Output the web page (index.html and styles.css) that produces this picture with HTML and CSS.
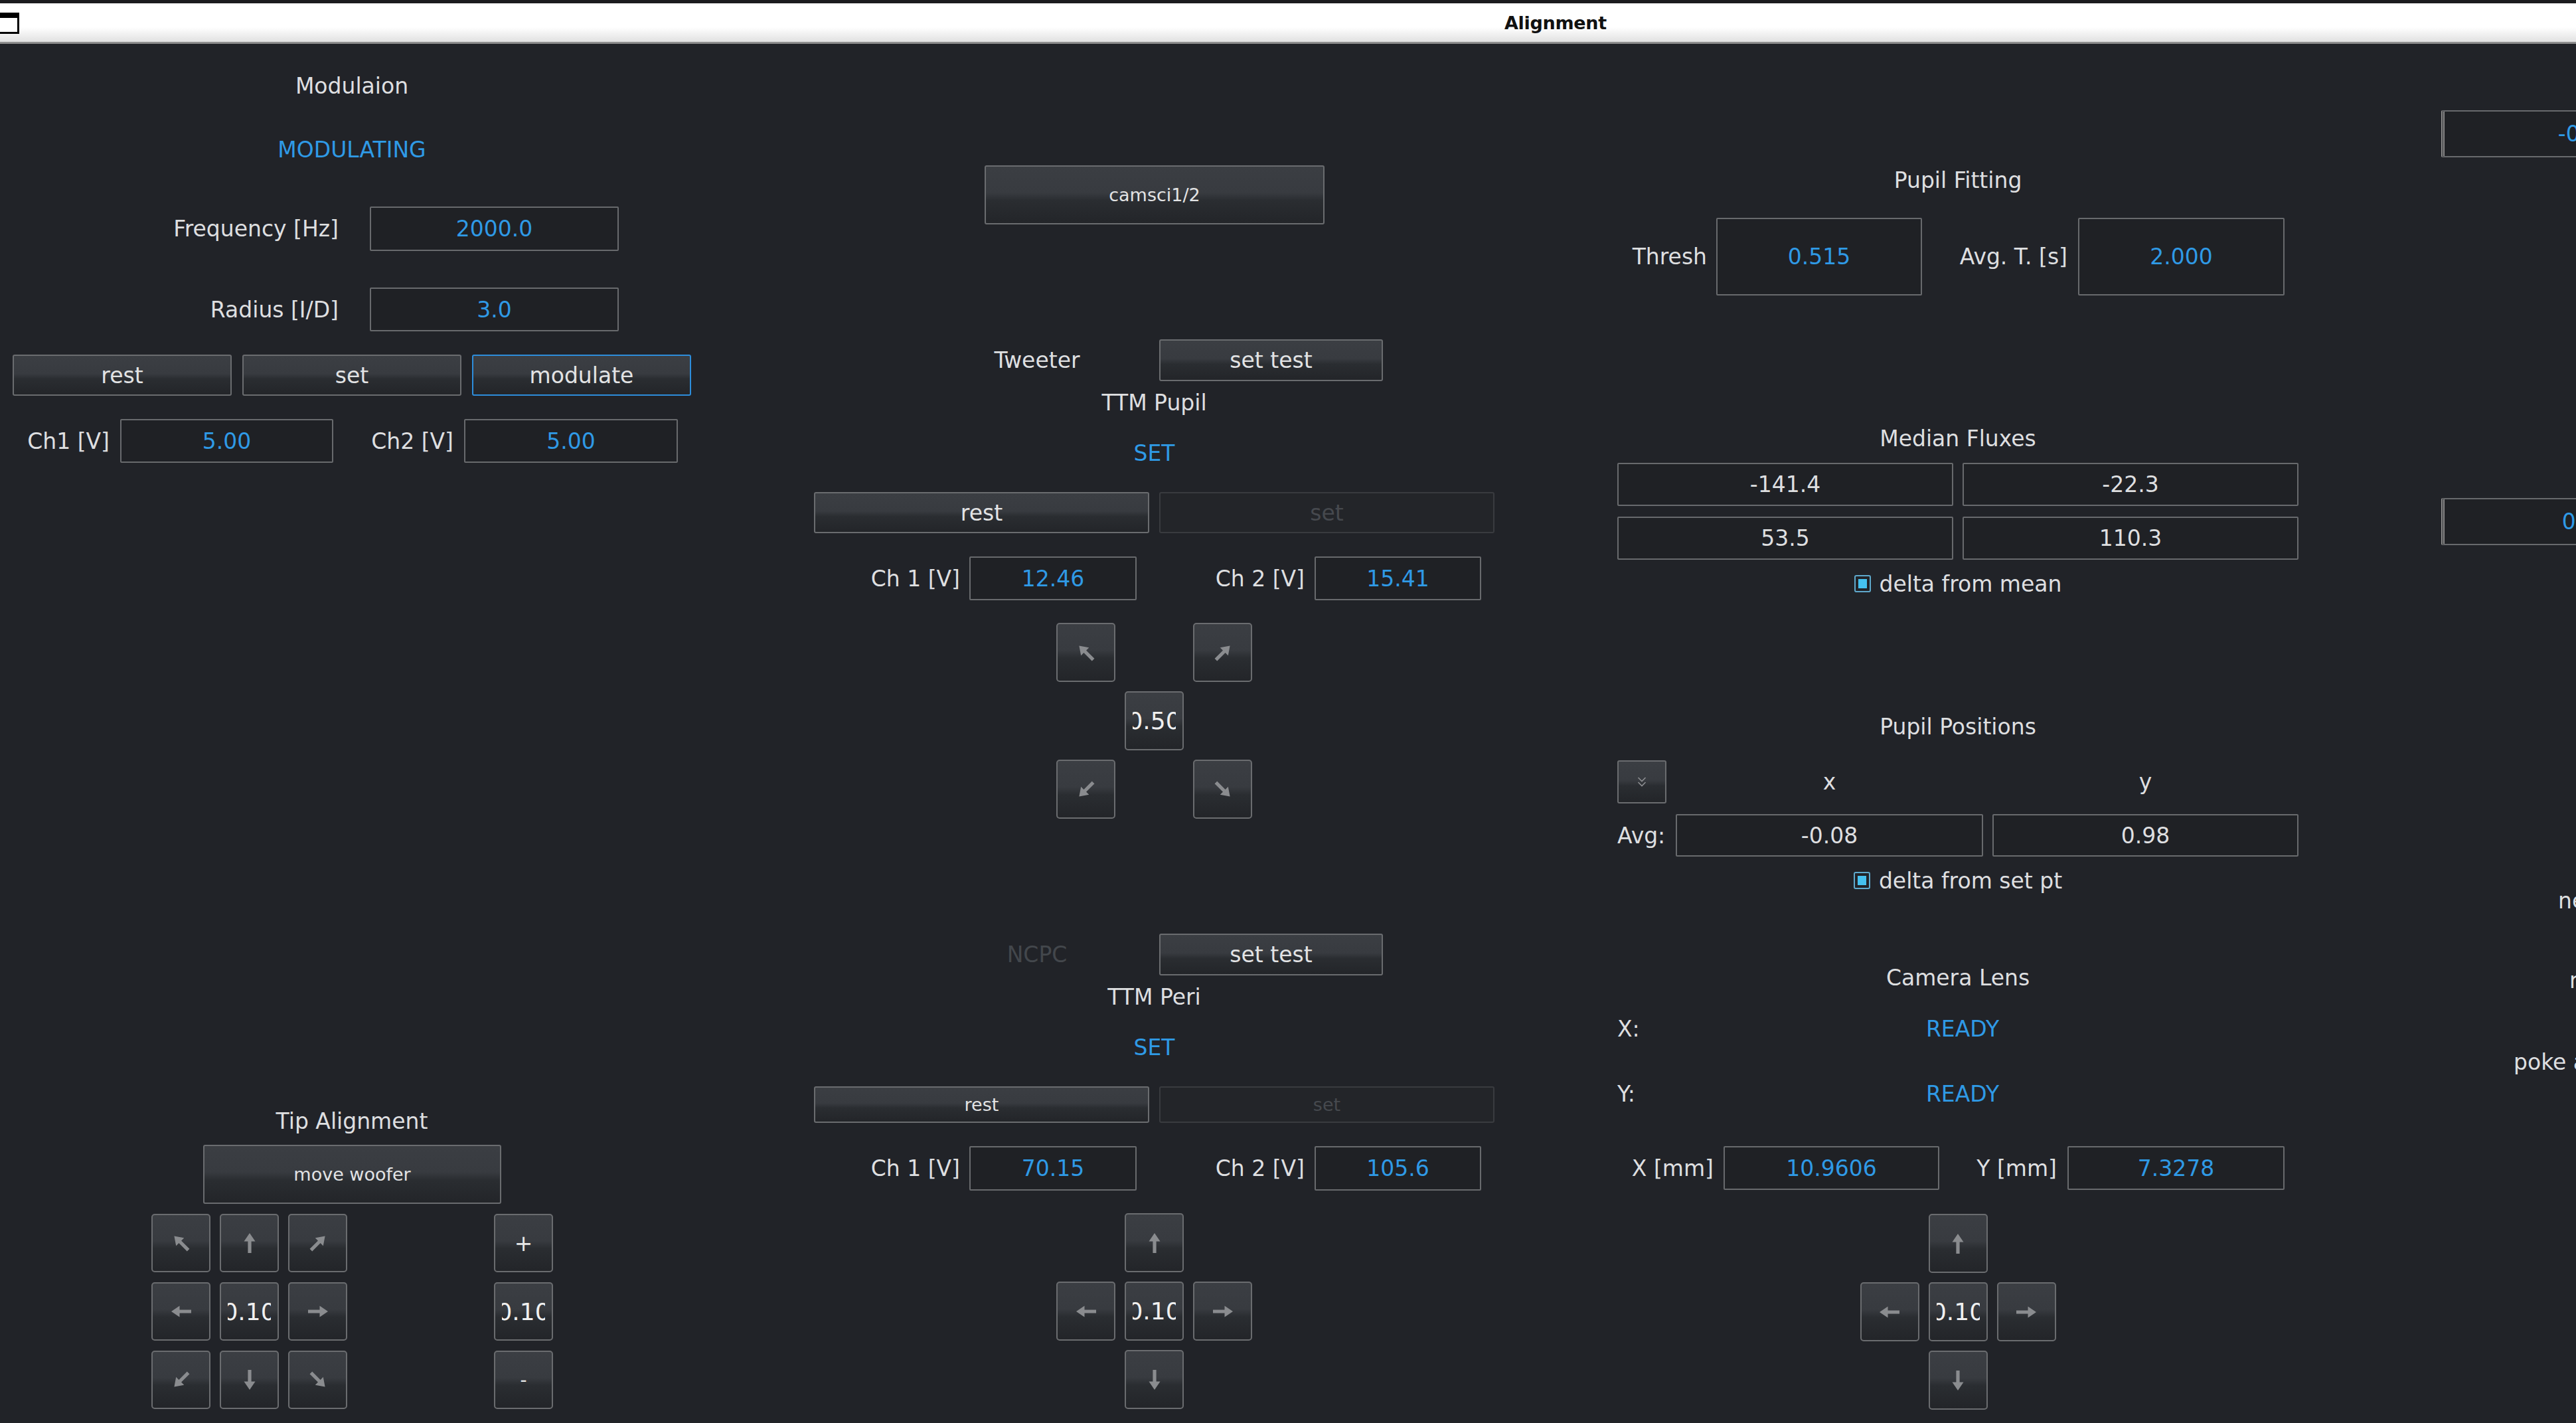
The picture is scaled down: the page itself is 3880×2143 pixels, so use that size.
FILE: index.html
```html
<!DOCTYPE html>
<html>
<head>
<meta charset="utf-8">
<title>Alignment</title>
<link rel="stylesheet" href="styles.css">
</head>
<body>
<svg class="defs" width="0" height="0" aria-hidden="true">
  <defs>
    <symbol id="arr" viewBox="0 0 32 32"><path d="M16 1 L24.5 13.5 L18.6 13.5 L18.6 31 L13.4 31 L13.4 13.5 L7.5 13.5 Z" fill="#8a8c8f"/></symbol>
    <symbol id="chev" viewBox="0 0 16 20"><polyline points="2.5,3 8,8.5 13.5,3" fill="none" stroke="#8d8f92" stroke-width="1.6"/><polyline points="2.5,10 8,15.5 13.5,10" fill="none" stroke="#8d8f92" stroke-width="1.6"/></symbol>
  </defs>
</svg>

<header class="titlebar">
  <div class="winicon"></div>
  <div class="title">Alignment</div>
</header>

<main class="main">
  <!-- LEFT COLUMN -->
  <section class="col col-left">
    <div class="heading mt44">Modulaion</div>
    <div class="status mt56">MODULATING</div>
    <div class="row h67 mt65">
      <span class="lbl w510">Frequency [Hz]</span>
      <span class="box blue ml47 w375">2000.0</span>
    </div>
    <div class="row h66 mt55">
      <span class="lbl w510">Radius [I/D]</span>
      <span class="box blue ml47 w375">3.0</span>
    </div>
    <div class="btn3 mt35">
      <button class="btn">rest</button>
      <button class="btn">set</button>
      <button class="btn active">modulate</button>
    </div>
    <div class="row h66 mt35">
      <span class="lbl w165">Ch1 [V]</span>
      <span class="box blue ml16 w321">5.00</span>
      <span class="lbl w181">Ch2 [V]</span>
      <span class="box blue ml16 w322">5.00</span>
    </div>
    <div class="heading mt972">Tip Alignment</div>
    <button class="btn small woofer mt15">move woofer</button>
    <div class="tip mt15">
      <div class="tipgrid">
        <button class="key"><svg class="r315"><use href="#arr"/></svg></button>
        <button class="key"><svg class="r0"><use href="#arr"/></svg></button>
        <button class="key"><svg class="r45"><use href="#arr"/></svg></button>
        <button class="key"><svg class="r270"><use href="#arr"/></svg></button>
        <button class="key"><span class="num"><span>0.10</span></span></button>
        <button class="key"><svg class="r90"><use href="#arr"/></svg></button>
        <button class="key"><svg class="r225"><use href="#arr"/></svg></button>
        <button class="key"><svg class="r180"><use href="#arr"/></svg></button>
        <button class="key"><svg class="r135"><use href="#arr"/></svg></button>
      </div>
      <div class="pmgrid">
        <button class="key sign">+</button>
        <button class="key"><span class="num"><span>0.10</span></span></button>
        <button class="key sign minus">-</button>
      </div>
    </div>
  </section>

  <!-- MIDDLE COLUMN -->
  <section class="col col-mid">
    <button class="btn small camsci mt183">camsci1/2</button>
    <div class="row h63 mt173">
      <span class="lbl-c">Tweeter</span>
      <button class="btn settest">set test</button>
    </div>
    <div class="heading mt13">TTM Pupil</div>
    <div class="status mt36">SET</div>
    <div class="pair h62 mt38">
      <button class="btn">rest</button>
      <button class="btn disabled">set</button>
    </div>
    <div class="row h66 mt35">
      <span class="lbl w220">Ch 1 [V]</span>
      <span class="box blue ml14 w252">12.46</span>
      <span class="lbl w253">Ch 2 [V]</span>
      <span class="box blue ml15 w251">15.41</span>
    </div>
    <div class="pad mt34">
      <button class="key"><svg class="r315"><use href="#arr"/></svg></button>
      <span></span>
      <button class="key"><svg class="r45"><use href="#arr"/></svg></button>
      <span></span>
      <button class="key"><span class="num"><span>0.50</span></span></button>
      <span></span>
      <button class="key"><svg class="r225"><use href="#arr"/></svg></button>
      <span></span>
      <button class="key"><svg class="r135"><use href="#arr"/></svg></button>
    </div>
    <div class="row h63 mt173">
      <span class="lbl-c dim">NCPC</span>
      <button class="btn settest">set test</button>
    </div>
    <div class="heading mt13">TTM Peri</div>
    <div class="status mt36">SET</div>
    <div class="pair h55 mt38">
      <button class="btn small">rest</button>
      <button class="btn small disabled">set</button>
    </div>
    <div class="row h67 mt35">
      <span class="lbl w220">Ch 1 [V]</span>
      <span class="box blue ml14 w252">70.15</span>
      <span class="lbl w253">Ch 2 [V]</span>
      <span class="box blue ml15 w251">105.6</span>
    </div>
    <div class="pad mt34">
      <span></span>
      <button class="key"><svg class="r0"><use href="#arr"/></svg></button>
      <span></span>
      <button class="key"><svg class="r270"><use href="#arr"/></svg></button>
      <button class="key"><span class="num"><span>0.10</span></span></button>
      <button class="key"><svg class="r90"><use href="#arr"/></svg></button>
      <span></span>
      <button class="key"><svg class="r180"><use href="#arr"/></svg></button>
      <span></span>
    </div>
  </section>

  <!-- RIGHT COLUMN -->
  <section class="col col-right">
    <div class="heading mt186">Pupil Fitting</div>
    <div class="row h117 mt36">
      <span class="lbl w135">Thresh</span>
      <span class="box blue ml14 w310">0.515</span>
      <span class="lbl w219">Avg. T. [s]</span>
      <span class="box blue ml16 w311">2.000</span>
    </div>
    <div class="heading mt196">Median Fluxes</div>
    <div class="flux mt16">
      <span class="box">-141.4</span>
      <span class="box">-22.3</span>
      <span class="box">53.5</span>
      <span class="box">110.3</span>
    </div>
    <div class="check-row mt16"><span class="chk"></span><span>delta from mean</span></div>
    <div class="heading mt176">Pupil Positions</div>
    <div class="posgrid mt30">
      <button class="btn dd"><svg><use href="#chev"/></svg></button>
      <span class="axis">x</span>
      <span class="axis">y</span>
      <span class="avg">Avg:</span>
      <span class="box">-0.08</span>
      <span class="box">0.98</span>
    </div>
    <div class="check-row mt16"><span class="chk"></span><span>delta from set pt</span></div>
    <div class="heading mt107">Camera Lens</div>
    <div class="status-row mt36"><span class="st-lbl">X:</span><span class="st-val">READY</span></div>
    <div class="status-row mt58"><span class="st-lbl">Y:</span><span class="st-val">READY</span></div>
    <div class="row h66 mt59">
      <span class="lbl w145">X [mm]</span>
      <span class="box blue ml15 w325">10.9606</span>
      <span class="lbl w177">Y [mm]</span>
      <span class="box blue ml16 w327">7.3278</span>
    </div>
    <div class="pad mt36">
      <span></span>
      <button class="key"><svg class="r0"><use href="#arr"/></svg></button>
      <span></span>
      <button class="key"><svg class="r270"><use href="#arr"/></svg></button>
      <button class="key"><span class="num"><span>0.10</span></span></button>
      <button class="key"><svg class="r90"><use href="#arr"/></svg></button>
      <span></span>
      <button class="key"><svg class="r180"><use href="#arr"/></svg></button>
      <span></span>
    </div>
  </section>

  <!-- FAR RIGHT (clipped) -->
  <section class="col col-far">
    <span class="box blue farbox mt100">-0.01</span>
    <span class="box blue farbox mt513">0.00</span>
    <span class="farlbl fl1">ne</span>
    <span class="farlbl fl2">n</span>
    <span class="farlbl fl3">poke a</span>
  </section>
</main>
</body>
</html>
```

FILE: styles.css
```css
* { box-sizing: border-box; }
html, body { margin: 0; padding: 0; }
button { margin: 0; }
body {
  width: 3880px;
  height: 2143px;
  overflow: hidden;
  background: #212328;
  font-family: "DejaVu Sans", "Liberation Sans", sans-serif;
  font-size: 33px;
  color: #dedfe0;
}
.defs { position: absolute; width: 0; height: 0; }

/* title bar */
.titlebar {
  height: 66px;
  border-top: 5px solid #1b1c1f;
  border-bottom: 3px solid #8e8e8e;
  background: linear-gradient(#ffffff 0%, #ffffff 62%, #efefef 82%, #e1e1e1 100%);
  display: flex;
  align-items: center;
}
.winicon {
  width: 29px;
  height: 32px;
  margin-top: 2px;
  background: #ffffff;
  border: 3px solid #000;
  border-left: 0;
  border-top-width: 8px;
  flex-shrink: 0;
}
.title {
  margin-left: 2237px;
  font-weight: bold;
  font-size: 27px;
  color: #111;
  letter-spacing: -0.3px;
}

.main { display: flex; align-items: flex-start; }
.col { display: flex; flex-direction: column; flex-shrink: 0; }
.col-left { width: 1060px; }
.col-mid { width: 1025px; margin-left: 166px; }
.col-right { width: 1026px; margin-left: 185px; }
.col-far { width: 434px; margin-left: 215px; }

/* buttons */
.btn, .key {
  font-family: inherit;
  font-size: 33px;
  color: #e2e3e4;
  border: 2px solid #6a6c6f;
  border-radius: 3px;
  background: linear-gradient(#3b3e43 0%, #383b40 46%, #2a2d31 60%, #232529 100%);
  padding: 0;
  display: flex;
  align-items: center;
  justify-content: center;
  white-space: nowrap;
}
.btn.small { font-size: 27px; }
.btn.active { border-color: #2d8ddb; }
.btn.disabled { background: #232529; border-color: #393b3f; color: #46494e; }

/* spacing utilities */
.mt13 { margin-top: 13px; } .mt15 { margin-top: 15px; } .mt16 { margin-top: 16px; }
.mt30 { margin-top: 30px; } .mt34 { margin-top: 34px; } .mt35 { margin-top: 35px; }
.mt36 { margin-top: 36px; } .mt38 { margin-top: 38px; } .mt44 { margin-top: 44px; }
.mt55 { margin-top: 55px; } .mt56 { margin-top: 56px; } .mt58 { margin-top: 58px; }
.mt59 { margin-top: 59px; } .mt65 { margin-top: 65px; } .mt100 { margin-top: 100px; }
.mt107 { margin-top: 107px; } .mt173 { margin-top: 173px; } .mt176 { margin-top: 176px; }
.mt183 { margin-top: 183px; } .mt186 { margin-top: 186px; } .mt196 { margin-top: 196px; }
.mt513 { margin-top: 513px; } .mt972 { margin-top: 972px; }
.ml14 { margin-left: 14px; } .ml15 { margin-left: 15px; } .ml16 { margin-left: 16px; } .ml47 { margin-left: 47px; }
.h55 { height: 55px; } .h62 { height: 62px; } .h63 { height: 63px; } .h66 { height: 66px; }
.h67 { height: 67px; } .h117 { height: 117px; }
.w135 { width: 135px; } .w145 { width: 145px; } .w165 { width: 165px; } .w177 { width: 177px; }
.w181 { width: 181px; } .w219 { width: 219px; } .w220 { width: 220px; } .w251 { width: 251px; }
.w252 { width: 252px; } .w253 { width: 253px; } .w310 { width: 310px; } .w311 { width: 311px; }
.w321 { width: 321px; } .w322 { width: 322px; } .w325 { width: 325px; } .w327 { width: 327px; }
.w375 { width: 375px; } .w510 { width: 510px; }

/* text */
.heading { height: 40px; line-height: 40px; text-align: center; white-space: nowrap; }
.status { height: 40px; line-height: 40px; text-align: center; color: #2f9ae6; }
.blue { color: #2f9ae6; }
.dim { color: #43474c; }

.row { display: flex; align-items: stretch; }
.row > .lbl { display: flex; align-items: center; justify-content: flex-end; white-space: nowrap; flex-shrink: 0; }
.lbl-c { width: 338px; margin-left: 167px; display: flex; align-items: center; justify-content: center; }

/* boxes */
.box {
  display: flex;
  align-items: center;
  justify-content: center;
  border: 2px solid #686a6d;
  border-radius: 2px;
  background: #1f2125;
  white-space: nowrap;
  flex-shrink: 0;
}

.btn3 { display: grid; grid-template-columns: repeat(3, 330px); column-gap: 16px; margin-left: 19px; height: 62px; }
.woofer { width: 449px; height: 89px; margin-left: 306px; }
.camsci { width: 512px; height: 89px; margin-left: 257px; }
.settest { width: 337px; margin-left: 15px; }
.pair { display: grid; grid-template-columns: 505px 505px; column-gap: 15px; }

/* keypads */
.key { border-radius: 5px; }
.key svg { width: 32px; height: 32px; }
.r0 { transform: rotate(0deg); } .r45 { transform: rotate(45deg); } .r90 { transform: rotate(90deg); }
.r135 { transform: rotate(135deg); } .r180 { transform: rotate(180deg); } .r225 { transform: rotate(225deg); }
.r270 { transform: rotate(270deg); } .r315 { transform: rotate(315deg); }
.num { width: 65px; overflow: hidden; display: flex; justify-content: center; font-size: 36px; color: #f0f0f0; }
.num span { flex-shrink: 0; white-space: nowrap; }
.sign { font-size: 33px; color: #e8e8e8; }
.minus { font-size: 28px; }

.pad {
  display: grid;
  grid-template-columns: repeat(3, 89px);
  grid-template-rows: repeat(3, 89px);
  gap: 14px;
  justify-content: center;
}
.tip { display: flex; margin-left: 228px; }
.tipgrid { display: grid; grid-template-columns: repeat(3, 89px); grid-template-rows: repeat(3, 88px); column-gap: 14px; row-gap: 15px; }
.pmgrid { display: grid; grid-template-columns: 89px; grid-template-rows: repeat(3, 88px); row-gap: 15px; margin-left: 221px; }

/* right column */
.flux { display: grid; grid-template-columns: 506px 506px; grid-template-rows: 65px 65px; column-gap: 14px; row-gap: 16px; }
.check-row { height: 40px; display: flex; align-items: center; justify-content: center; gap: 13px; }
.chk {
  width: 25px; height: 26px;
  border: 2px solid #5fa9cc;
  border-radius: 3px;
  padding: 4px;
  background: #45c1ef;
  background-clip: content-box;
}
.posgrid { display: grid; grid-template-columns: 74px 463px 461px; grid-template-rows: 65px 64px; column-gap: 14px; row-gap: 16px; }
.dd { border-radius: 3px; }
.dd svg { width: 16px; height: 20px; }
.axis { display: flex; align-items: center; justify-content: center; }
.avg { display: flex; align-items: center; }
.status-row { display: grid; height: 40px; align-items: center; }
.status-row > span { grid-area: 1 / 1; }
.st-lbl { justify-self: start; }
.st-val { justify-self: center; color: #2f9ae6; padding-left: 14px; }

/* far right */
.farbox { width: 434px; height: 71px; border-left: 5px double #8a8a8a; }
.farlbl { height: 40px; line-height: 40px; white-space: nowrap; }
.fl1 { margin-top: 516px; margin-left: 176px; }
.fl2 { margin-top: 80px; margin-left: 193px; }
.fl3 { margin-top: 83px; margin-left: 109px; }
```
